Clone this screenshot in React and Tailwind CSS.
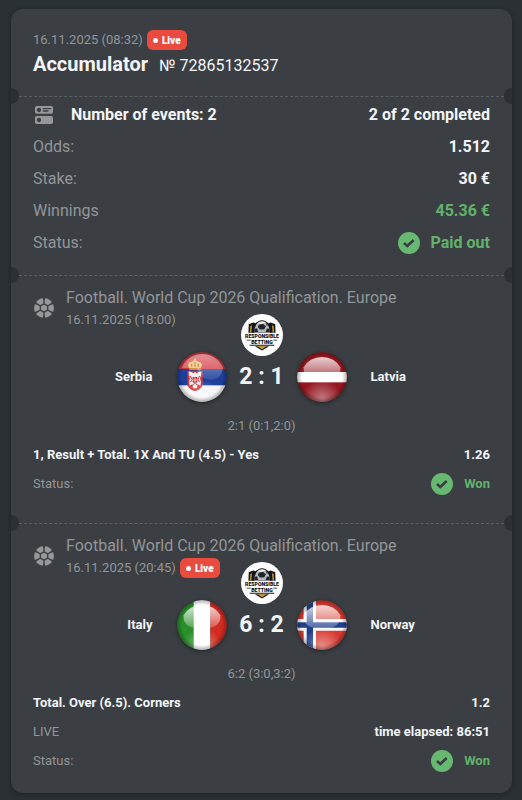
import React from 'react';

const LiveBadge = () => (
  <span className="inline-flex items-center h-5 gap-1 px-1.5 rounded-md bg-[#e94b3f] text-white text-[10px] font-black">
    <span className="w-[5px] h-[5px] rounded-full bg-white" />
    Live
  </span>
);

const EventsIcon = () => (
  <svg viewBox="0 0 54 54" className="w-[18px] h-[18px]" aria-hidden="true">
    <rect x="0" y="0" width="54" height="23" rx="5" fill="#93989b" />
    <rect x="0" y="30" width="54" height="24" rx="5" fill="#93989b" />
    <circle cx="12" cy="12" r="6.5" fill="#3b3f43" />
    <circle cx="12" cy="42" r="6.5" fill="#3b3f43" />
    <rect x="23" y="6" width="26" height="4" rx="2" fill="#3b3f43" />
    <rect x="23" y="13" width="18" height="4" rx="2" fill="#3b3f43" />
  </svg>
);

const FootballIcon = () => (
  <svg viewBox="0 0 60 60" className="w-5 h-5" aria-hidden="true">
    <circle cx="30" cy="30" r="30" fill="#93989b" />
    <path
      d="M30 17.5l11 6.25v12.5L30 42.5l-11-6.25v-12.5z"
      fill="#93989b"
      stroke="#3b3f43"
      strokeWidth="4"
      strokeLinejoin="round"
    />
    {[0, 60, 120, 180, 240, 300].map((angle) => (
      <path key={angle} transform={`rotate(${angle} 30 30)`} d="M28 18L28 8 26 -1h8l-2 9v10z" fill="#3b3f43" />
    ))}
  </svg>
);

const CheckIcon = () => (
  <svg viewBox="0 0 66 66" className="w-[22px] h-[22px]" aria-hidden="true">
    <circle cx="33" cy="33" r="33" fill="#67b972" />
    <path d="M18 33l10 9 19-18" fill="none" stroke="#3b3f43" strokeWidth="8" />
  </svg>
);

const ResponsibleBetting = () => (
  <svg viewBox="0 0 130 130" className="w-[42px] h-[42px]" role="img" aria-label="Responsible Betting">
    <circle cx="65" cy="65" r="65" fill="#fff" />
    <path d="M23 58l1-26 14-6 12 4-9 28zM107 58l-1-26-14-6-12 4 9 28z" fill="#15161a" />
    <path d="M28 57l1-20 5-2-2 22zM102 57l-1-20-5-2 2 22z" fill="#d5a02d" />
    <path d="M36 57a29 38 0 0 1 58 0z" fill="#15161a" />
    <path d="M41 56a24 34 0 0 1 48 0z" fill="#b9bcc0" />
    <path d="M52 30q12-10 24-3l-10 3z" fill="#f3f3f4" />
    <path d="M55 33l13-3 9 8-5 10H58l-6-8zM43 46l7-2 3 12H41zM88 46l-8-1-4 11h13zM76 27l8 7-4 3z" fill="#222428" />
    <text x="65" y="75" textAnchor="middle" fontSize="16" fontWeight="900" fill="#0b0b0d">RESPONSIBLE</text>
    <text x="65" y="92" textAnchor="middle" fontSize="16" fontWeight="900" fill="#0b0b0d">BETTING</text>
    <path d="M18 80h12v2H18zM100 80h12v2h-12zM27 95h76v3H27z" fill="#15161a" />
    <path d="M43 100h44l-22 13z" fill="#15161a" />
    <path d="M51 100h28l-14 9z" fill="#d5a02d" />
  </svg>
);

const FLAGS = {
  serbia: (
    <>
      <rect width="150" height="52" fill="#d2363d" />
      <rect y="52" width="150" height="48" fill="#1f3f9c" />
      <rect y="100" width="150" height="50" fill="#f4f5f7" />
      <path d="M31 56h46v38q0 17-23 24-23-7-23-24z" fill="#cf3238" />
      <path d="M50 64q-10-8-15-5-1 12 4 20-5 10-1 22l8-4 2 12h12l2-12 8 4q4-12-1-22 5-8 4-20-5-3-15 5l-4-5z" fill="#f3eef0" />
      <path d="M47 75h14v13q-2 7-7 9-5-2-7-9z" fill="#c3272f" />
      <path d="M54 76v19M48 84h12" stroke="#f3eef0" strokeWidth="2.5" />
      <path d="M40 72l5 10-5 9M68 72l-5 10 5 9M46 101l4-5M62 101l-4-5" stroke="#cf3238" strokeWidth="3" fill="none" />
      <path d="M36 48q-8-14 6-18 6-1 9-5v-5h6v5q3 4 9 5 14 4 6 18z" fill="#efc25a" />
      <path d="M44 35v9M54 30v14M64 35v9" stroke="#b65a35" strokeWidth="4" />
      <path d="M37 48h34v6H37z" fill="#e08a45" />
    </>
  ),
  latvia: (
    <>
      <rect width="150" height="150" fill="#941822" />
      <rect y="60" width="150" height="31" fill="#fff" />
    </>
  ),
  italy: (
    <>
      <rect width="50" height="150" fill="#2a8f2a" />
      <rect x="50" width="50" height="150" fill="#fff" />
      <rect x="100" width="50" height="150" fill="#d22b22" />
    </>
  ),
  norway: (
    <>
      <rect width="150" height="150" fill="#d63a30" />
      <path d="M20 0h37v150H20zM0 57h150v35H0z" fill="#f7f8fa" />
      <path d="M29 0h19v150H29zM0 67h150v16H0z" fill="#223f8d" />
    </>
  ),
};

const Flag = ({ country }) => (
  <svg viewBox="0 0 150 150" className="w-[50px] h-[50px] rounded-full shadow-[0_1px_4px_rgba(0,0,0,0.45)]" role="img" aria-label={country}>
    <defs>
      <clipPath id={`clip-${country}`}>
        <circle cx="75" cy="75" r="75" />
      </clipPath>
      <radialGradient id={`edge-${country}`} cx="0.5" cy="0.5" r="0.5">
        <stop offset="0.8" stopColor="#000" stopOpacity="0" />
        <stop offset="1" stopColor="#000" stopOpacity="0.3" />
      </radialGradient>
      <radialGradient id={`glow-${country}`} cx="0.5" cy="0.95" r="0.4">
        <stop offset="0" stopColor="#fff" stopOpacity="0.45" />
        <stop offset="1" stopColor="#fff" stopOpacity="0" />
      </radialGradient>
      <linearGradient id={`gloss-${country}`} x1="0" y1="0" x2="0" y2="1">
        <stop offset="0" stopColor="#fff" stopOpacity="0.8" />
        <stop offset="1" stopColor="#fff" stopOpacity="0.2" />
      </linearGradient>
      <linearGradient id={`sheen-${country}`} x1="0" y1="0" x2="0" y2="1">
        <stop offset="0" stopColor="#fff" stopOpacity="0.45" />
        <stop offset="1" stopColor="#fff" stopOpacity="0.1" />
      </linearGradient>
    </defs>
    <g clipPath={`url(#clip-${country})`}>
      {FLAGS[country]}
      <rect width="150" height="150" fill={`url(#glow-${country})`} />
      <rect width="150" height="150" fill={`url(#edge-${country})`} />
      {country === 'serbia' ? (
        <path d="M14 48A65 60 0 0 1 138 48Q132 84 100 83 66 82 60 48z" fill="url(#sheen-serbia)" />
      ) : (
        <path d="M20 46A60 52 0 0 1 130 46Q134 86 75 86 16 86 20 46z" fill={`url(#gloss-${country})`} />
      )}
    </g>
  </svg>
);

// Dashed tear line with a notch on both edges of the ticket
const TearLine = () => (
  <div className="h-0 flex items-center justify-between" aria-hidden="true">
    <span className="w-2 h-4 shrink-0 rounded-r-full bg-[#2b3034]" />
    <span className="grow border-t border-dashed border-[#5a5f62]" />
    <span className="w-2 h-4 shrink-0 rounded-l-full bg-[#2b3034]" />
  </div>
);

const Status = ({ children }) => (
  <span className="flex items-center gap-[11px] font-bold text-[#62b26c]">
    <CheckIcon />
    {children}
  </span>
);

const SummaryRow = ({ label, children }) => (
  <div className="flex items-center justify-between h-8">
    <dt className="text-[#929699]">{label}</dt>
    <dd className="font-bold text-[#f2f5f9]">{children}</dd>
  </div>
);

const DetailRow = ({ label, strong, children }) => (
  <div className="flex items-center justify-between h-[29px]">
    <dt className={strong ? 'font-bold text-[#f2f5f9]' : 'text-[#929699]'}>{label}</dt>
    <dd className="font-bold text-[#f2f5f9]">{children}</dd>
  </div>
);

const matches = [
  {
    date: '16.11.2025 (18:00)',
    live: false,
    home: 'Serbia',
    away: 'Latvia',
    homeFlag: 'serbia',
    awayFlag: 'latvia',
    score: '2 : 1',
    periods: '2:1 (0:1,2:0)',
    market: '1, Result + Total. 1X And TU (4.5) - Yes',
    odds: '1.26',
  },
  {
    date: '16.11.2025 (20:45)',
    live: true,
    home: 'Italy',
    away: 'Norway',
    homeFlag: 'italy',
    awayFlag: 'norway',
    score: '6 : 2',
    periods: '6:2 (3:0,3:2)',
    market: 'Total. Over (6.5). Corners',
    odds: '1.2',
    elapsed: '86:51',
  },
];

const Match = ({ match }) => (
  <section className="px-[22px] pt-[11px] pb-[25px] last:pb-[18px] text-[13px]">
    <div className="flex items-center">
      <div className="w-[33px] pl-px">
        <FootballIcon />
      </div>
      <div className="text-[#929699]">
        <h2 className="text-base leading-6">Football. World Cup 2026 Qualification. Europe</h2>
        <div className="flex items-center gap-1 h-5">
          <span>{match.date}</span>
          {match.live && <LiveBadge />}
        </div>
      </div>
    </div>

    <div className="flex justify-center -mt-4">
      <ResponsibleBetting />
    </div>

    <div className="grid grid-cols-[1fr_auto_1fr] items-center -mt-1 font-bold text-[#f2f5f9]">
      <div className="flex items-center justify-end gap-6">
        <span>{match.home}</span>
        <Flag country={match.homeFlag} />
      </div>
      <div className="w-[70px] text-center text-[23px]">{match.score}</div>
      <div className="flex items-center gap-6">
        <Flag country={match.awayFlag} />
        <span>{match.away}</span>
      </div>
    </div>

    <p className="mt-3.5 mb-1 text-center leading-5 text-[#929699]">{match.periods}</p>

    <dl>
      <DetailRow label={match.market} strong>{match.odds}</DetailRow>
      {match.elapsed && <DetailRow label="LIVE">time elapsed: {match.elapsed}</DetailRow>}
      <DetailRow label="Status:">
        <Status>Won</Status>
      </DetailRow>
    </dl>
  </section>
);

const App = () => {
  return (
    <div className="min-h-screen bg-[#2b3034] pt-[9px] pb-1.5 pl-[11px] pr-2.5 font-[Roboto,sans-serif]">
      <main className="rounded-xl bg-[#3b3f43] shadow-[0_1px_5px_rgba(0,0,0,0.3)]">
        <header className="px-[22px] pt-[21px] pb-4">
          <div className="flex items-center gap-1 h-5 text-[13px] text-[#929699]">
            <span>16.11.2025 (08:32)</span>
            <LiveBadge />
          </div>
          <div className="flex items-baseline gap-[11px] leading-7 text-[#f2f5f9]">
            <h1 className="text-xl leading-7 font-bold">Accumulator</h1>
            <span>№ 72865132537</span>
          </div>
        </header>

        <TearLine />

        <section className="px-[22px] pt-[3px] pb-4">
          <div className="flex items-center h-8 font-bold text-[#f2f5f9]">
            <div className="w-[38px] pl-0.5">
              <EventsIcon />
            </div>
            <span>Number of events: 2</span>
            <span className="ml-auto">2 of 2 completed</span>
          </div>
          <dl>
            <SummaryRow label="Odds:">1.512</SummaryRow>
            <SummaryRow label="Stake:">30 €</SummaryRow>
            <SummaryRow label="Winnings">
              <span className="text-[#62b26c]">45.36 €</span>
            </SummaryRow>
            <SummaryRow label="Status:">
              <Status>Paid out</Status>
            </SummaryRow>
          </dl>
        </section>

        {matches.map((match) => (
          <React.Fragment key={match.home}>
            <TearLine />
            <Match match={match} />
          </React.Fragment>
        ))}
      </main>
    </div>
  );
};

export default App;
